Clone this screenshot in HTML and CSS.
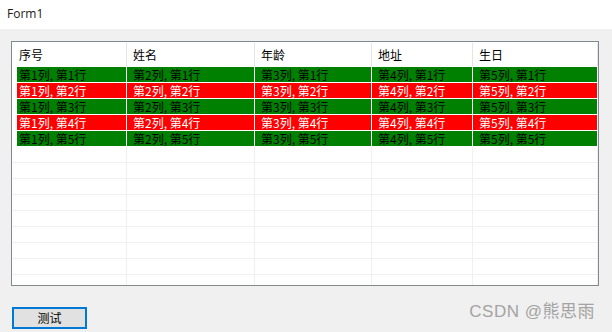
FILE: index.html
```html
<!DOCTYPE html>
<html lang="zh">
<head>
<meta charset="utf-8">
<link rel="stylesheet" href="styles.css">
</head>
<body>
<div class="window">
  <div class="titlebar">Form1</div>
  <div class="client">
    <div class="listview">
      <div class="row header">
        <div class="hcell">序号</div>
        <div class="hcell">姓名</div>
        <div class="hcell">年龄</div>
        <div class="hcell">地址</div>
        <div class="hcell">生日</div>
      </div>
      <div class="row data green">
        <div class="cell"><span class="fill first">第1列, 第1行</span></div>
        <div class="cell"><span class="fill">第2列, 第1行</span></div>
        <div class="cell"><span class="fill">第3列, 第1行</span></div>
        <div class="cell"><span class="fill">第4列, 第1行</span></div>
        <div class="cell"><span class="fill">第5列, 第1行</span></div>
      </div>
      <div class="row data red">
        <div class="cell"><span class="fill first">第1列, 第2行</span></div>
        <div class="cell"><span class="fill">第2列, 第2行</span></div>
        <div class="cell"><span class="fill">第3列, 第2行</span></div>
        <div class="cell"><span class="fill">第4列, 第2行</span></div>
        <div class="cell"><span class="fill">第5列, 第2行</span></div>
      </div>
      <div class="row data green">
        <div class="cell"><span class="fill first">第1列, 第3行</span></div>
        <div class="cell"><span class="fill">第2列, 第3行</span></div>
        <div class="cell"><span class="fill">第3列, 第3行</span></div>
        <div class="cell"><span class="fill">第4列, 第3行</span></div>
        <div class="cell"><span class="fill">第5列, 第3行</span></div>
      </div>
      <div class="row data red">
        <div class="cell"><span class="fill first">第1列, 第4行</span></div>
        <div class="cell"><span class="fill">第2列, 第4行</span></div>
        <div class="cell"><span class="fill">第3列, 第4行</span></div>
        <div class="cell"><span class="fill">第4列, 第4行</span></div>
        <div class="cell"><span class="fill">第5列, 第4行</span></div>
      </div>
      <div class="row data green">
        <div class="cell"><span class="fill first">第1列, 第5行</span></div>
        <div class="cell"><span class="fill">第2列, 第5行</span></div>
        <div class="cell"><span class="fill">第3列, 第5行</span></div>
        <div class="cell"><span class="fill">第4列, 第5行</span></div>
        <div class="cell"><span class="fill">第5列, 第5行</span></div>
      </div>
      <div class="row empty"><div class="cell"></div><div class="cell"></div><div class="cell"></div><div class="cell"></div><div class="cell"></div></div>
      <div class="row empty"><div class="cell"></div><div class="cell"></div><div class="cell"></div><div class="cell"></div><div class="cell"></div></div>
      <div class="row empty"><div class="cell"></div><div class="cell"></div><div class="cell"></div><div class="cell"></div><div class="cell"></div></div>
      <div class="row empty"><div class="cell"></div><div class="cell"></div><div class="cell"></div><div class="cell"></div><div class="cell"></div></div>
      <div class="row empty"><div class="cell"></div><div class="cell"></div><div class="cell"></div><div class="cell"></div><div class="cell"></div></div>
      <div class="row empty"><div class="cell"></div><div class="cell"></div><div class="cell"></div><div class="cell"></div><div class="cell"></div></div>
      <div class="row empty"><div class="cell"></div><div class="cell"></div><div class="cell"></div><div class="cell"></div><div class="cell"></div></div>
      <div class="row empty"><div class="cell"></div><div class="cell"></div><div class="cell"></div><div class="cell"></div><div class="cell"></div></div>
      <div class="row empty"><div class="cell"></div><div class="cell"></div><div class="cell"></div><div class="cell"></div><div class="cell"></div></div>
    </div>
    <button class="btn">测试</button>
  </div>
  <div class="watermark">CSDN @熊思雨</div>
</div>
</body>
</html>
```

FILE: styles.css
```css
* { box-sizing: border-box; }

html, body {
  margin: 0;
  padding: 0;
  background: #f0f0f0;
}

.window {
  position: relative;
  width: 612px;
  height: 332px;
  background: #f0f0f0;
  overflow: hidden;
  font-family: "Noto Sans CJK SC", "Noto Sans", sans-serif;
  font-size: 12px;
  color: #000;
}

.titlebar {
  height: 29px;
  background: #ffffff;
  padding-left: 7px;
  font-family: "Open Sans", "Noto Sans", sans-serif;
  font-size: 12px;
  line-height: 28px;
  color: #1a1a1a;
}

.client {
  display: flex;
  flex-direction: column;
  align-items: flex-start;
  padding: 12px 0 0 11px;
}

.listview {
  width: 588px;
  height: 245px;
  border: 1px solid #828790;
  background: #ffffff;
  overflow: hidden;
}

.row {
  display: grid;
  grid-template-columns: 115px 128px 117px 101px 125px;
}

.header {
  height: 25px;
}

.hcell {
  position: relative;
  padding-left: 7px;
  line-height: 25px;
  white-space: nowrap;
}

.hcell + .hcell {
  padding-left: 6px;
}

.hcell::after {
  content: "";
  position: absolute;
  right: 0;
  top: 1px;
  bottom: 1px;
  width: 1px;
  background: #e5e5e5;
}

.cell {
  height: 16px;
  border-right: 1px solid #f0f0f0;
  border-bottom: 1px solid #f0f0f0;
  display: flex;
  overflow: hidden;
}

.data .cell {
  border-color: #ffffff;
}

.fill {
  flex: 1;
  height: 15px;
  line-height: 15px;
  padding-left: 6px;
  white-space: nowrap;
}

.fill.first {
  margin-left: 5px;
  padding-left: 2px;
}

.green .fill {
  background: #008000;
  color: #000000;
}

.red .fill {
  background: #ff0000;
  color: #ffffff;
}

.btn {
  margin: 21px 0 0 1px;
  width: 75px;
  height: 22px;
  border: 2px solid #0078d7;
  background: #e1e1e1;
  font-family: "Noto Sans CJK SC", sans-serif;
  font-size: 12px;
  line-height: 16px;
  color: #000;
  padding: 0;
}

.watermark {
  position: absolute;
  right: 17px;
  top: 300px;
  font-family: "Liberation Sans", "Noto Sans CJK SC", sans-serif;
  font-size: 17px;
  line-height: 23px;
  color: #a3a3a3;
  letter-spacing: 0.5px;
}
```
